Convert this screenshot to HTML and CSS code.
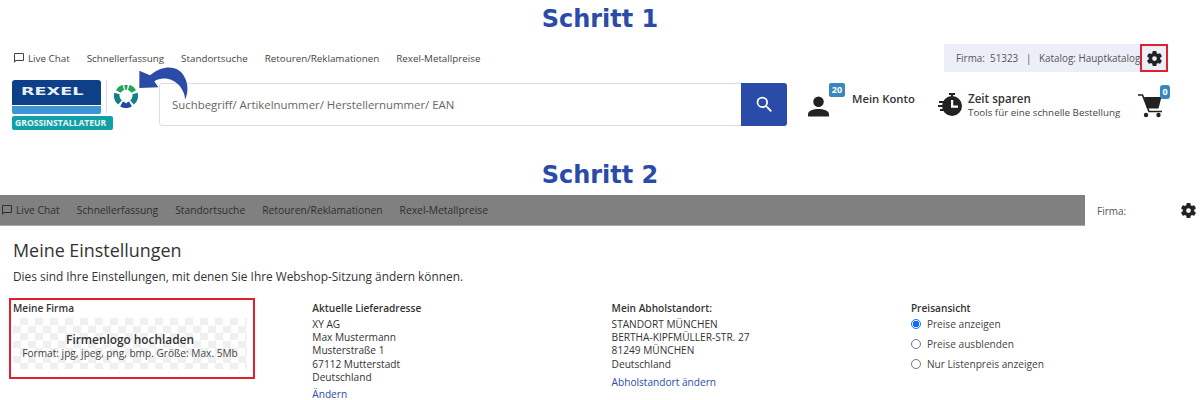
FILE: index.html
```html
<!DOCTYPE html>
<html lang="de">
<head>
<meta charset="utf-8">
<title>Schritte</title>
<link rel="stylesheet" href="styles.css">
</head>
<body>
<div class="page">
  <h2 class="step step-one">Schritt 1</h2>
  <div class="topbar">
    <nav class="nav">
      <span class="chat"><svg class="chat-icon" viewBox="0 0 24 24"><path d="M20 2H4a2 2 0 0 0-2 2v18l4-4h14a2 2 0 0 0 2-2V4a2 2 0 0 0-2-2zm0 14H5.200L4 17.200V4h16z"/></svg>Live Chat</span>
      <span>Schnellerfassung</span>
      <span>Standortsuche</span>
      <span>Retouren/Reklamationen</span>
      <span>Rexel-Metallpreise</span>
    </nav>
    <div class="company">
      <span class="company-text">Firma:&nbsp; 51323 &nbsp;&nbsp;|&nbsp;&nbsp; Katalog: Hauptkatalog</span>
      <span class="gear-box"><svg class="gear" viewBox="0 0 24 24"><path fill-rule="evenodd" d="M19.140 12.940c.04-.3.06-.61.06-.94s-.02-.64-.07-.94l2.030-1.580a.5.5 0 0 0 .12-.61l-1.920-3.320a.5.5 0 0 0-.59-.22l-2.390.96a7 7 0 0 0-1.620-.94l-.36-2.540a.48.48 0 0 0-.48-.41h-3.840a.48.48 0 0 0-.47.41l-.36 2.540c-.59.24-1.130.57-1.620.94l-2.390-.96a.49.49 0 0 0-.59.22L2.740 8.870a.48.48 0 0 0 .12.61l2.030 1.580c-.05.3-.09.63-.09.94s.02.64.07.94l-2.030 1.580a.5.5 0 0 0-.12.61l1.920 3.320c.12.22.37.29.59.22l2.390-.96c.5.38 1.030.7 1.620.94l.36 2.540c.05.24.24.41.48.41h3.840c.24 0 .44-.17.47-.41l.36-2.540c.59-.24 1.130-.56 1.620-.94l2.390.96c.22.08.47 0 .59-.22l1.920-3.320a.48.48 0 0 0-.12-.61zM12 15a3 3 0 1 1 0-6 3 3 0 0 1 0 6z"/></svg></span>
    </div>
  </div>
  <header class="header">
    <div class="logo">
      <div class="logo-main">
        <div class="logo-blue"><span class="logo-word">REXEL</span></div>
        <div class="logo-light"></div>
        <div class="logo-tag">GROSSINSTALLATEUR</div>
      </div>
      <div class="logo-sep"></div>
      <svg class="logo-mark" viewBox="0 0 24 23" fill="none" stroke-width="5.500">
        <path stroke="#22a45a" d="M4.300 6.500A9 9 0 0 1 9.300 2.400"/>
        <path stroke="#22a45a" d="M10.600 2.100A9 9 0 0 1 13.400 2.100"/>
        <path stroke="#22a45a" d="M14.700 2.400A9 9 0 0 1 19.700 6.500"/>
        <path stroke="#137f8c" d="M3 8.500A9 9 0 0 0 6 17.500"/>
        <path stroke="#137f8c" d="M21 8.500A9 9 0 0 1 18 17.500"/>
        <path stroke="#1f4aa0" d="M7.500 19A9 9 0 0 0 16.500 19"/>
        <path fill="#fff" stroke="none" d="M8 9.500h8l-1 5.500-3 3.500-3-3.500z"/>
      </svg>
    </div>
    <form class="search">
      <span class="search-text">Suchbegriff/ Artikelnummer/ Herstellernummer/ EAN</span>
      <span class="search-btn"><svg class="search-icon" viewBox="0 0 24 24"><path d="M15.500 14h-.79l-.28-.27A6.470 6.470 0 0 0 16 9.500 6.500 6.500 0 1 0 9.500 16c1.610 0 3.090-.59 4.230-1.570l.27.28v.79l5 4.990L20.490 19zm-6 0a4.500 4.500 0 1 1 0-9 4.500 4.500 0 0 1 0 9z"/></svg></span>
    </form>
    <div class="account">
      <span class="icon-wrap"><svg class="person" viewBox="0 0 22 22"><circle cx="11" cy="6" r="5.500"/><path d="M0 21.500v-2.500c0-4 6-5.500 11-5.500s11 1.500 11 5.500v2.500z"/></svg><span class="badge badge-account">20</span></span>
      <span class="account-label">Mein Konto</span>
    </div>
    <div class="save">
      <svg class="watch" viewBox="0 0 25 24"><path d="M11 0h6v2h-2v2h-2V2h-2z"/><circle cx="14" cy="13" r="10"/><path fill="#fff" d="M13 7h2.200v5.500H20v2.200h-7z"/><path d="M1 8h5v2H1zM0 12h4v2H0zM2 16h4v2H2z"/></svg>
      <div class="save-text"><b>Zeit sparen</b><small>Tools für eine schnelle Bestellung</small></div>
    </div>
    <span class="icon-wrap cart-wrap"><svg class="cart" viewBox="8 14 26 24"><path d="M14 17h17.500l-3 11.500H17z"/><path fill="none" stroke="#222" stroke-width="1.600" d="M8 15h4.500l6.500 16.500h13"/><circle cx="16" cy="35" r="2.200"/><circle cx="28.500" cy="35" r="2.200"/></svg><span class="badge badge-cart">0</span></span>
  </header>
  <svg class="arrow" viewBox="0 0 270 165"><path d="M103 38V90L160 88 148 70C170 55 205 60 225 85 235 100 240 110 240 125 250 105 250 80 240 60 225 25 180 15 135 52z"/></svg>

  <h2 class="step step-two">Schritt 2</h2>
  <div class="topbar-two">
    <nav class="nav nav-dark">
      <span class="chat"><svg class="chat-icon" viewBox="0 0 24 24"><path d="M20 2H4a2 2 0 0 0-2 2v18l4-4h14a2 2 0 0 0 2-2V4a2 2 0 0 0-2-2zm0 14H5.200L4 17.200V4h16z"/></svg>Live Chat</span>
      <span>Schnellerfassung</span>
      <span>Standortsuche</span>
      <span>Retouren/Reklamationen</span>
      <span>Rexel-Metallpreise</span>
    </nav>
    <div class="company-two">
      <span>Firma:</span>
      <svg class="gear" viewBox="0 0 24 24"><path fill-rule="evenodd" d="M19.140 12.940c.04-.3.06-.61.06-.94s-.02-.64-.07-.94l2.030-1.580a.5.5 0 0 0 .12-.61l-1.920-3.320a.5.5 0 0 0-.59-.22l-2.390.96a7 7 0 0 0-1.620-.94l-.36-2.540a.48.48 0 0 0-.48-.41h-3.840a.48.48 0 0 0-.47.41l-.36 2.540c-.59.24-1.130.57-1.620.94l-2.390-.96a.49.49 0 0 0-.59.22L2.740 8.870a.48.48 0 0 0 .12.61l2.030 1.580c-.05.3-.09.63-.09.94s.02.64.07.94l-2.030 1.580a.5.5 0 0 0-.12.61l1.920 3.320c.12.22.37.29.59.22l2.390-.96c.5.38 1.030.7 1.620.94l.36 2.540c.05.24.24.41.48.41h3.840c.24 0 .44-.17.47-.41l.36-2.540c.59-.24 1.130-.56 1.620-.94l2.390.96c.22.08.47 0 .59-.22l1.920-3.320a.48.48 0 0 0-.12-.61zM12 15a3 3 0 1 1 0-6 3 3 0 0 1 0 6z"/></svg>
    </div>
  </div>
  <main class="settings">
    <h1 class="settings-title">Meine Einstellungen</h1>
    <p class="settings-sub">Dies sind Ihre Einstellungen, mit denen Sie Ihre Webshop-Sitzung ändern können.</p>
    <div class="columns">
      <section class="col col-firm">
        <h3 class="label">Meine Firma</h3>
        <div class="upload">
          <strong>Firmenlogo hochladen</strong>
          <span>Format: jpg, jpeg, png, bmp. Größe: Max. 5Mb</span>
        </div>
      </section>
      <section class="col">
        <h3 class="label">Aktuelle Lieferadresse</h3>
        <p class="lines">XY AG<br>Max Mustermann<br>Musterstraße 1<br>67112 Mutterstadt<br>Deutschland</p>
        <a class="link">Ändern</a>
      </section>
      <section class="col">
        <h3 class="label">Mein Abholstandort:</h3>
        <p class="lines">STANDORT MÜNCHEN<br>BERTHA-KIPFMÜLLER-STR. 27<br>81249 MÜNCHEN<br>Deutschland</p>
        <a class="link link-pickup">Abholstandort ändern</a>
      </section>
      <section class="col">
        <h3 class="label">Preisansicht</h3>
        <div class="radio"><i class="dot on"></i>Preise anzeigen</div>
        <div class="radio"><i class="dot"></i>Preise ausblenden</div>
        <div class="radio"><i class="dot"></i>Nur Listenpreis anzeigen</div>
      </section>
    </div>
  </main>
</div>
</body>
</html>
```
FILE: styles.css
```css
*, *::before, *::after { box-sizing: border-box; }
html, body { margin: 0; padding: 0; background: #fff; }
body { font-family: "Open Sans", "Liberation Sans", sans-serif; color: #333; overflow: hidden; }
.page { position: relative; width: 1200px; height: 400px; overflow: hidden; }
.step { margin: 0; text-align: center; font-family: "DejaVu Sans", sans-serif; font-weight: 700; font-size: 24px; color: #2b4ba8; line-height: 28px; }
.step-one { padding-top: 5px; height: 44px; }
.step-two { height: 37px; padding-top: 3px; margin-top: 27px; }

.topbar { display: flex; justify-content: space-between; height: 28px; padding-left: 13px; padding-right: 32px; }
.nav { display: flex; align-items: center; gap: 17px; font-size: 9.800px; color: #444; }
.chat { display: inline-flex; align-items: center; gap: 3px; }
.chat-icon { width: 12px; height: 12px; fill: #444; }
.company { display: flex; align-items: center; background: #eceff8; width: 224px; padding-left: 12px; border-radius: 2px; font-size: 9.900px; color: #555; }
.company-text { width: 184px; white-space: nowrap; }
.gear-box { display: flex; align-items: center; justify-content: center; width: 28px; height: 28px; border: 2px solid #e0202f; }
.gear { width: 19px; height: 19px; fill: #222; flex: none; }

.header { display: flex; align-items: center; height: 53px; margin-top: 6px; padding-left: 12px; }
.logo { display: flex; align-items: flex-start; width: 147px; height: 50px; }
.logo-main { width: 101px; }
.logo-blue { height: 25px; width: 89px; background: #0d4088; border-radius: 3px 3px 0 0; padding: 5px 0 0 9px; }
.logo-word { display: block; color: #e8eef6; font-family: "DejaVu Sans", sans-serif; font-size: 10px; font-weight: 700; line-height: 13px; transform: scaleX(1.760); transform-origin: left center; white-space: nowrap; }
.logo-light { height: 8px; width: 89px; background: #3c97d3; border-radius: 0 0 2px 2px; margin-top: 1px; }
.logo-tag { margin-top: 2px; height: 14px; background: #12a0a8; color: #e8f6f6; font-size: 8.600px; font-weight: 700; line-height: 14px; padding-left: 3px; border-radius: 2px; white-space: nowrap; overflow: hidden; }
.logo-sep { width: 1px; height: 33px; background: #d8d8d8; margin-left: -7px; }
.logo-mark { width: 24px; height: 23px; margin: 5px 0 0 7px; }
.search { display: flex; width: 628px; height: 43px; border: 1px solid #ddd; border-radius: 3px; align-items: stretch; }
.search-text { flex: 1; font-size: 11.400px; color: #666; padding-left: 12px; line-height: 41px; white-space: nowrap; }
.search-btn { width: 46px; margin: -1px; background: #2b4ba8; border-radius: 0 3px 3px 0; display: flex; align-items: center; justify-content: center; }
.search-icon { width: 21px; height: 21px; fill: #fff; }
.account { display: flex; align-items: flex-start; width: 130px; margin-left: 21px; height: 45px; }
.icon-wrap { position: relative; display: block; }
.person { display: block; width: 21px; height: 21px; margin-top: 14px; fill: #222; }
.badge { position: absolute; background: #3a87bd; color: #fff; font-size: 9px; font-weight: 700; line-height: 14px; text-align: center; border-radius: 2px; }
.badge-account { left: 21px; top: 1px; width: 16px; height: 14px; }
.account-label { margin-left: 23px; margin-top: 9px; font-size: 11.300px; font-weight: 600; color: #333; line-height: 16px; }
.save { display: flex; align-items: center; gap: 5px; width: 199px; height: 45px; }
.watch { width: 25px; height: 24px; fill: #222; flex: none; }
.save-text { display: flex; flex-direction: column; }
.save-text b { font-size: 11.600px; font-weight: 600; line-height: 15px; }
.save-text small { font-size: 9.800px; color: #444; line-height: 13px; }
.cart-wrap { margin-left: 1px; }
.cart { display: block; width: 26px; height: 24px; fill: #222; margin-top: 3px; }
.badge-cart { left: 22px; top: -6px; width: 10px; height: 14px; border-radius: 3px; }
.arrow { position: absolute; left: 105px; top: 58px; width: 90px; height: 55px; fill: #2b4ba8; }

.topbar-two { display: flex; height: 31px; }
.nav-dark { width: 1085px; background: #808080; color: #2f2f2f; gap: 17px; padding-left: 1px; font-size: 10.300px; border-bottom: 1px solid #aaa; }
.nav-dark .chat-icon { fill: #2f2f2f; }
.company-two { flex: 1; display: flex; align-items: center; justify-content: space-between; padding: 0 2px 0 12px; font-size: 10px; color: #555; }

.settings { padding: 0 13px; }
.settings-title { margin: 12px 0 0; font-size: 17.900px; font-weight: 400; line-height: 25px; color: #333; }
.settings-sub { margin: 5px 0 0; font-size: 11.870px; line-height: 16px; color: #333; }
.columns { display: grid; grid-template-columns: repeat(4, 299.300px); margin-top: 14px; }
.col { min-width: 0; }
.col-firm { position: relative; }
.col-firm::before { content: ""; position: absolute; left: -4px; top: 0; width: 246px; height: 81px; border: 2.500px solid #e0202f; }
.label { margin: 4px 0 0; font-size: 10.150px; font-weight: 600; line-height: 13px; color: #333; }
.upload { margin-top: 3px; width: 234px; height: 51px; display: flex; flex-direction: column; align-items: center; justify-content: center; padding-top: 5px; background: repeating-conic-gradient(#f0f0f0 0 25%, #fff 0 50%) 0 0 / 15px 15px; }
.upload strong { font-size: 11.850px; font-weight: 600; line-height: 15px; color: #333; }
.upload span { font-size: 10.150px; line-height: 13px; color: #444; }
.lines { margin: 3px 0 0; font-size: 10.150px; line-height: 13.200px; color: #333; }
.link { display: block; margin-top: 4px; font-size: 10.150px; line-height: 13px; color: #2b4ba8; }
.link-pickup { margin-top: 5px; }
.radio { display: flex; align-items: center; gap: 6px; height: 20px; font-size: 10.150px; color: #444; }
.radio:first-of-type { margin-top: -1px; }
.dot { width: 10px; height: 10px; border-radius: 50%; border: 1px solid #777; background: #fff; flex: none; }
.dot.on { border: 1px solid #0d6efd; background: radial-gradient(circle, #0d6efd 0 3px, #fff 3.500px); }
```
